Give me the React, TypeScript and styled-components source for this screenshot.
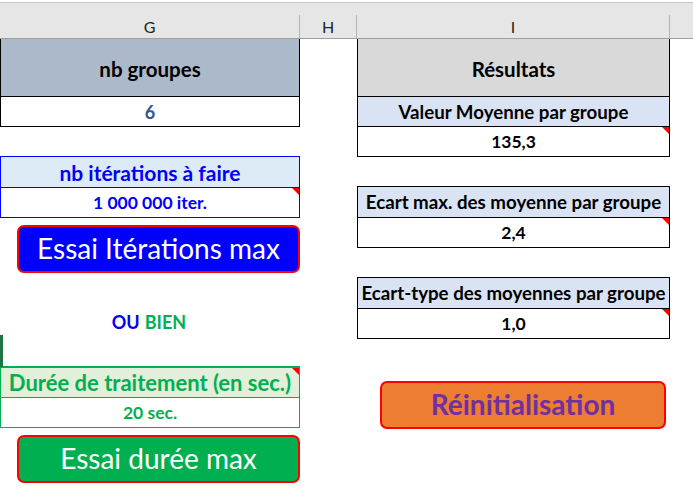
import styled, { createGlobalStyle } from "styled-components";

const GlobalStyle = createGlobalStyle`
  html, body {
    margin: 0;
    padding: 0;
    background: #ffffff;
  }
  body {
    font-family: "Lato", "Open Sans", sans-serif;
  }
  * {
    box-sizing: border-box;
  }
`;

const BLUE = "#0000ff";
const GREEN = "#00b050";

export default function App() {
  return (
    <Sheet>
      <GlobalStyle />
      <ColumnHeaders>
        <ColLetter $width={300}>G</ColLetter>
        <ColLetter $width={57}>H</ColLetter>
        <ColLetter $width={313}>I</ColLetter>
        <ColFiller />
      </ColumnHeaders>
      <Body>
        <LeftColumn>
          <Block $border="#000" $noTop>
            <TitleCell $bg="#acb9ca">nb groupes</TitleCell>
            <ValueCell $color="#2f5597" $size={18}>6</ValueCell>
          </Block>
          <Block $border={BLUE} $mt={29}>
            <HeadCell $bg="#ddebf7" $color={BLUE} $size={21}>
              nb itérations à faire
            </HeadCell>
            <ValueCell $color={BLUE} $comment>
              1 000 000 iter.
            </ValueCell>
          </Block>
          <ActionButton $bg={BLUE} $color="#fff" $ml={17} $mt={7} $width={283}>
            Essai Itérations max
          </ActionButton>
          <OrRow>
            <OrWord $color={BLUE}>OU</OrWord>
            <OrWord $color={GREEN}>BIEN</OrWord>
          </OrRow>
          <Block $border={GREEN}>
            <ActiveMark />
            <HeadCell $bg="#e2efda" $color={GREEN} $size={22} $comment>
              Durée de traitement (en sec.)
            </HeadCell>
            <ValueCell $color={GREEN}>20 sec.</ValueCell>
          </Block>
          <ActionButton $bg={GREEN} $color="#fff" $ml={17} $mt={7} $width={283}>
            Essai durée max
          </ActionButton>
        </LeftColumn>
        <Spacer />
        <RightColumn>
          <Block $border="#000" $noTop>
            <TitleCell $bg="#d9d9d9">Résultats</TitleCell>
            <HeadCell $bg="#dae3f3">Valeur Moyenne par groupe</HeadCell>
            <ValueCell $comment>135,3</ValueCell>
          </Block>
          <Block $border="#000" $mt={29}>
            <HeadCell $bg="#dae3f3">Ecart max. des moyenne par groupe</HeadCell>
            <ValueCell $comment>2,4</ValueCell>
          </Block>
          <Block $border="#000" $mt={29}>
            <HeadCell $bg="#dae3f3">Ecart-type des moyennes par groupe</HeadCell>
            <ValueCell $comment>1,0</ValueCell>
          </Block>
          <ActionButton
            $bg="#ed7d31"
            $color="#7030a0"
            $bold
            $ml={23}
            $mt={42}
            $width={286}
          >
            Réinitialisation
          </ActionButton>
        </RightColumn>
      </Body>
    </Sheet>
  );
}

const Sheet = styled.div`
  width: 693px;
  height: 491px;
  overflow: hidden;
  background: #fff;
`;

const ColumnHeaders = styled.div`
  display: flex;
  height: 37px;
  margin-top: 2px;
  padding-top: 12px;
  background: #e6e6e6;
  border-top: 1px solid #c6c6c6;
  border-bottom: 1px solid #9e9e9e;
`;

const ColLetter = styled.div<{ $width: number }>`
  width: ${(p) => p.$width}px;
  display: flex;
  align-items: center;
  justify-content: center;
  border-right: 1px solid #b4b4b4;
  font-family: "Lato", sans-serif;
  font-size: 16px;
  color: #222;
`;

const ColFiller = styled.div`
  flex: 1;
`;

const Body = styled.div`
  display: flex;
  align-items: flex-start;
`;

const LeftColumn = styled.div`
  width: 300px;
  display: flex;
  flex-direction: column;
`;

const RightColumn = styled.div`
  width: 313px;
  display: flex;
  flex-direction: column;
`;

const Spacer = styled.div`
  width: 57px;
`;

const Block = styled.div<{ $border: string; $mt?: number; $noTop?: boolean }>`
  position: relative;
  display: flex;
  flex-direction: column;
  margin-top: ${(p) => p.$mt ?? 0}px;
  border: 1px solid ${(p) => p.$border};
  border-top: ${(p) => (p.$noTop ? "none" : `1px solid ${p.$border}`)};
  & > * + * {
    border-top: 1px solid ${(p) => p.$border};
  }
`;

const Comment = `
  &::after {
    content: "";
    position: absolute;
    top: 0;
    right: 0;
    width: 0;
    height: 0;
    border-top: 7px solid #ff0000;
    border-left: 7px solid transparent;
  }
`;

const TitleCell = styled.div<{ $bg: string }>`
  height: 57px;
  display: flex;
  align-items: center;
  justify-content: center;
  padding-top: 2px;
  background: ${(p) => p.$bg};
  font-weight: 700;
  font-size: 20.5px;
  color: #000;
`;

const HeadCell = styled.div<{
  $bg: string;
  $color?: string;
  $size?: number;
  $comment?: boolean;
}>`
  position: relative;
  height: 30px;
  display: flex;
  align-items: center;
  justify-content: center;
  white-space: nowrap;
  background: ${(p) => p.$bg};
  color: ${(p) => p.$color ?? "#000"};
  font-weight: 700;
  font-size: ${(p) => p.$size ?? 18.7}px;
  ${(p) => (p.$comment ? Comment : "")}
`;

const ValueCell = styled.div<{
  $color?: string;
  $size?: number;
  $comment?: boolean;
}>`
  position: relative;
  height: 30px;
  display: flex;
  align-items: center;
  justify-content: center;
  background: #fff;
  color: ${(p) => p.$color ?? "#000"};
  font-weight: 700;
  font-size: ${(p) => p.$size ?? 17.5}px;
  ${(p) => (p.$comment ? Comment : "")}
`;

const ActionButton = styled.button<{
  $bg: string;
  $color: string;
  $bold?: boolean;
  $ml: number;
  $mt: number;
  $width: number;
}>`
  width: ${(p) => p.$width}px;
  height: 48px;
  margin-left: ${(p) => p.$ml}px;
  margin-top: ${(p) => p.$mt}px;
  padding: 0 0 2px;
  display: flex;
  align-items: center;
  justify-content: center;
  background: ${(p) => p.$bg};
  color: ${(p) => p.$color};
  border: 2px solid #ff0000;
  border-radius: 7px;
  font-family: "Lato", sans-serif;
  font-size: 28px;
  font-weight: ${(p) => (p.$bold ? 700 : 400)};
  cursor: pointer;
`;

const OrRow = styled.div`
  height: 93px;
  display: flex;
  align-items: center;
  justify-content: center;
  gap: 5px;
  padding: 4px 2px 0 0;
  font-weight: 700;
  font-size: 18px;
`;

const OrWord = styled.span<{ $color: string }>`
  color: ${(p) => p.$color};
`;

const ActiveMark = styled.div`
  position: absolute;
  left: -1px;
  top: -32px;
  width: 3px;
  height: 32px;
  background: #217346;
`;
